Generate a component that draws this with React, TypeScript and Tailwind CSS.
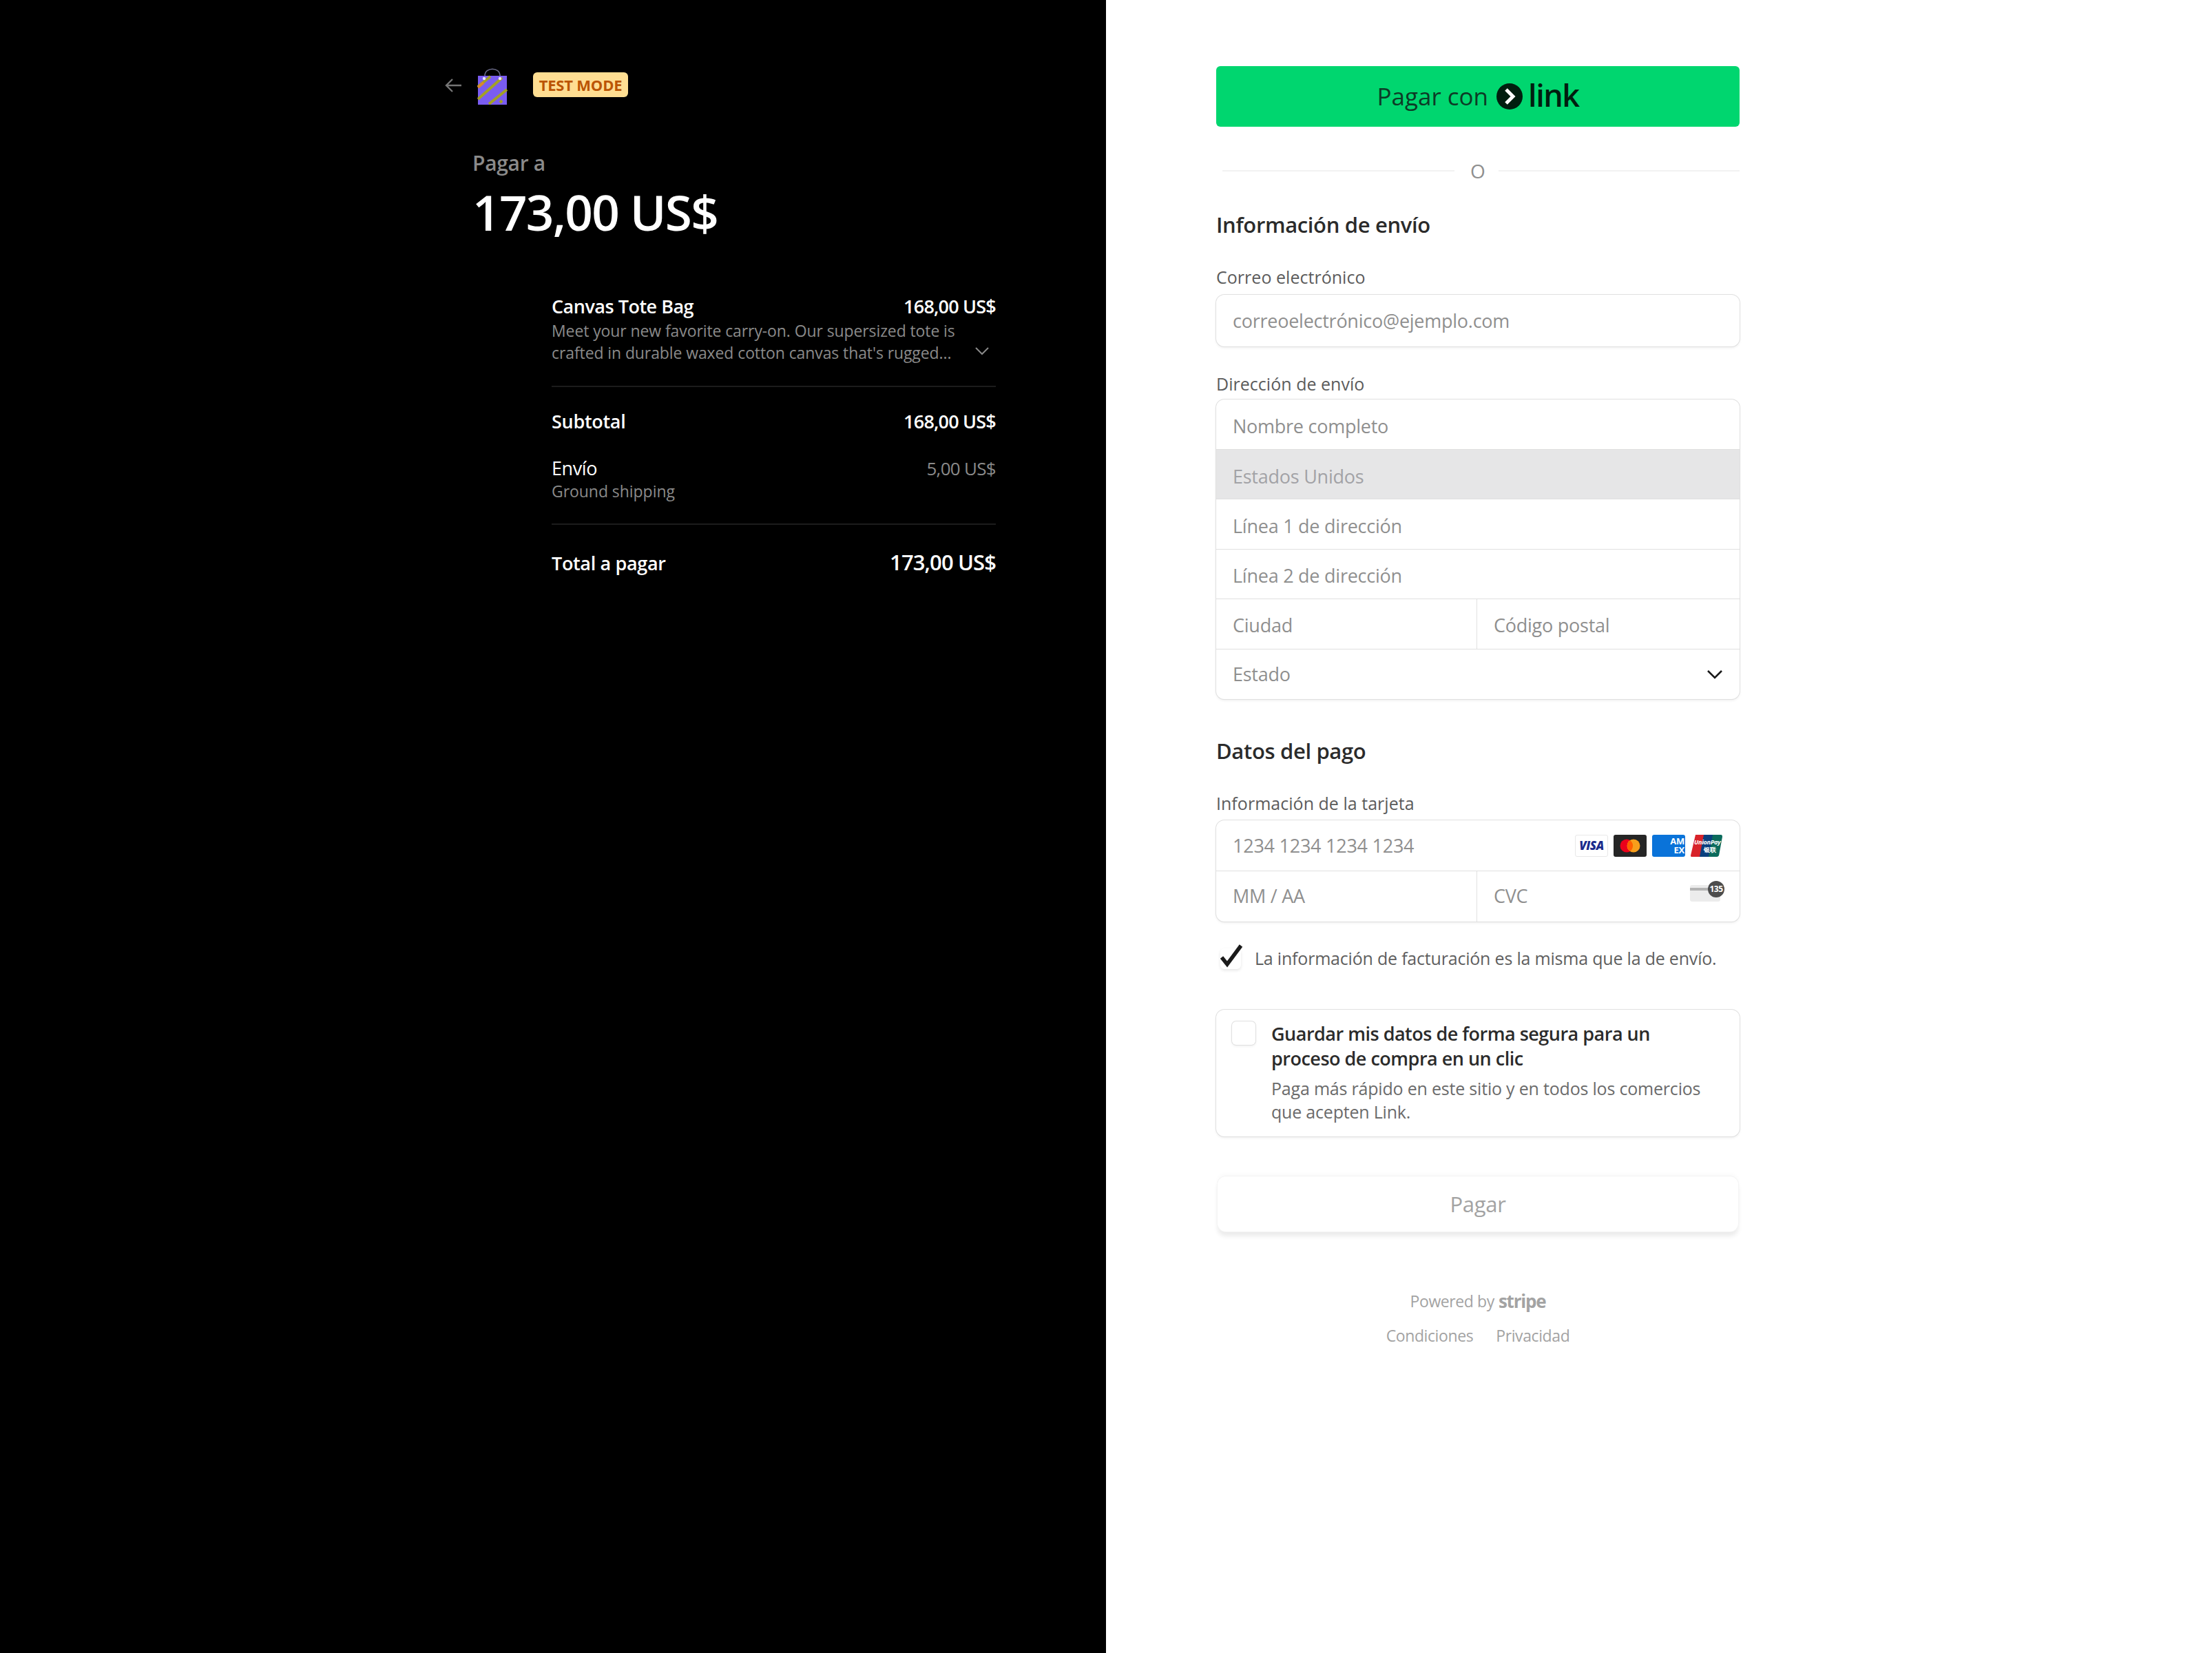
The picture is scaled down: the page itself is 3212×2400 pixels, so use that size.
import React from "react";

const FONT = "font-['Open_Sans','Noto_Sans',sans-serif]";
const SHADOW = "shadow-[0_0_0_1px_#e0e0e0,0_2px_4px_rgba(0,0,0,0.07),0_1px_1.5px_rgba(0,0,0,0.05)]";

function Bag() {
  return (
    <svg width="44" height="56" viewBox="0 0 44 56" className="block">
      <path d="M11 14 C11 1 33 1 33 14" fill="none" stroke="#6b6b8a" strokeWidth="1.5" />
      <rect x="1" y="14" width="42" height="42" fill="#7a5cf0" />
      <path d="M1 30 L19 15 M1 48 L36 17 M17 55 L43 34 M33 53 L36 50" stroke="#a3a024" strokeWidth="4" fill="none" />
      <path d="M1 31 L9 24" stroke="#d98a2b" strokeWidth="4" />
      <circle cx="10" cy="18" r="2.2" fill="#e8e4ff" />
      <circle cx="33" cy="18" r="2.2" fill="#e8e4ff" />
    </svg>
  );
}

function Row({ left, right, className = "" }: { left: React.ReactNode; right: React.ReactNode; className?: string }) {
  return (
    <div className={`flex justify-between items-center ${className}`}>
      {left}
      {right}
    </div>
  );
}

function Field({ children, className = "" }: { children: React.ReactNode; className?: string }) {
  return (
    <div className={`flex items-center px-[24px] text-[27px] tracking-[-0.25px] text-[#8f8f8f] ${className}`}>{children}</div>
  );
}

function Label({ children, className = "" }: { children: React.ReactNode; className?: string }) {
  return <div className={`h-[36px] leading-[36px] text-[25px] tracking-[0.03px] font-medium text-[#5c5c5c] ${className}`}>{children}</div>;
}

function Heading({ children, className = "" }: { children: React.ReactNode; className?: string }) {
  return <div className={`h-[44px] leading-[44px] text-[31px] tracking-[-0.35px] font-semibold text-[#2b2b2b] ${className}`}>{children}</div>;
}

function CardLogos() {
  return (
    <div className="flex gap-[8px]">
      <div className="w-[48px] h-[32px] rounded-[3px] border border-[#e8e8e8] bg-white flex items-center justify-center text-[17px] tracking-[-0.5px] italic font-extrabold text-[#1a2a8c]">VISA</div>
      <div className="w-[48px] h-[32px] rounded-[3px] bg-[#252525] flex items-center justify-center">
        <svg width="34" height="22" viewBox="0 0 34 22">
          <circle cx="12" cy="11" r="9.5" fill="#eb001b" />
          <circle cx="22" cy="11" r="9.5" fill="#f79e1b" />
          <path d="M17 3.2a9.5 9.5 0 0 1 0 15.6a9.5 9.5 0 0 1 0-15.6z" fill="#ff5f00" />
        </svg>
      </div>
      <div className="w-[48px] h-[32px] rounded-[3px] bg-[#0a73d9] flex flex-col items-end justify-center pr-[1px] text-[13px] leading-[13px] font-bold text-white">
        <span>AM</span>
        <span>EX</span>
      </div>
      <svg width="46" height="32" viewBox="0 0 46 32">
        <path d="M7 0H20L14 32H1Q0 32 0 30Z" fill="#d8232a" />
        <path d="M19 0H33L27 32H13Z" fill="#0a3f7e" />
        <path d="M32 0H44Q46 0 46 3L41 30Q40 32 38 32H26Z" fill="#0b6b5c" />
        <text x="5" y="14" fontSize="9" fontStyle="italic" fontWeight="700" fill="#fff">UnionPay</text>
        <text x="19" y="25" fontSize="9" fontWeight="700" fill="#fff">银联</text>
      </svg>
    </div>
  );
}

function CvcIcon() {
  return (
    <div className="relative w-[50px] h-[36px]">
      <div className="absolute left-0 top-[6px] w-[44px] h-[24px] rounded-[3px] bg-[#ececec]">
        <div className="mt-[4px] h-[4px] bg-[#b3b3b3]" />
      </div>
      <div className="absolute right-0 top-0 w-[24px] h-[24px] rounded-full bg-[#4d4d4d] flex items-center justify-center text-[12px] tracking-[-0.5px] font-bold text-white">135</div>
    </div>
  );
}

export default function App() {
  return (
    <div className={`flex min-h-screen w-full ${FONT}`}>
      <div className="w-[1606px] shrink-0 bg-black">
        <div className="ml-[645px] w-[801px] pt-[96px]">
          <div className="flex items-center h-[56px]">
            <svg width="26" height="24" viewBox="0 0 26 24" fill="none" stroke="#757575" strokeWidth="2.4" className="shrink-0">
              <path d="M25 12H3M12 3l-9 9 9 9" />
            </svg>
            <div className="ml-[22px]"><Bag /></div>
            <div className="ml-[37px] -translate-y-[1px] w-[138px] h-[36px] rounded-[6px] bg-[#ffde92] flex items-center justify-center text-[22px] font-bold tracking-[-0.2px] text-[#bb5504]">TEST MODE</div>
          </div>
          <div className="ml-[41px] mt-[65px] h-[40px] leading-[40px] text-[30px] tracking-[-0.3px] font-semibold text-[#8a8a8a]">Pagar a</div>
          <div className="ml-[41px] mt-[11px] h-[80px] leading-[80px] text-[71px] tracking-[-1.7px] font-semibold text-white">173,00 US$</div>
          <div className="ml-[156px] mt-[79px] text-white">
            <Row
              className="h-[36px]"
              left={<span className="text-[27px] tracking-[-0.5px] font-semibold">Canvas Tote Bag</span>}
              right={<span className="text-[27px] tracking-[-0.8px] font-semibold">168,00 US$</span>}
            />
            <div className="flex items-end justify-between mt-[0px] h-[66px] pb-[1px]">
              <div className="text-[23px] leading-[32px] tracking-[-0.1px] text-[#8a8a8a] pt-[1px]">
                <div>Meet your new favorite carry-on. Our supersized tote is</div>
                <div>crafted in durable waxed cotton canvas that's rugged...</div>
              </div>
              <svg width="20" height="14" viewBox="0 0 20 14" fill="none" stroke="#8a8a8a" strokeWidth="2" className="mb-[11px] mr-[10px]">
                <path d="M1 2l9 9 9-9" />
              </svg>
            </div>
            <div className="mt-[31px] h-[2px] bg-[#1c1c1c]" />
            <Row
              className="mt-[32px] h-[36px]"
              left={<span className="text-[27px] tracking-[-0.3px] font-semibold">Subtotal</span>}
              right={<span className="text-[27px] tracking-[-0.8px] font-semibold">168,00 US$</span>}
            />
            <Row
              className="mt-[32px] h-[36px]"
              left={<span className="text-[27px] tracking-[-0.4px] font-medium">Envío</span>}
              right={<span className="text-[26px] tracking-[-0.7px] text-[#8a8a8a]">5,00 US$</span>}
            />
            <div className="h-[30px] leading-[30px] text-[23px] tracking-[-0.05px] text-[#8a8a8a]">Ground shipping</div>
            <div className="mt-[32px] h-[2px] bg-[#1c1c1c]" />
            <Row
              className="mt-[36px] h-[40px]"
              left={<span className="text-[27px] tracking-[-0.35px] font-semibold">Total a pagar</span>}
              right={<span className="text-[31px] tracking-[-0.9px] font-semibold -translate-y-[2px]">173,00 US$</span>}
            />
          </div>
        </div>
      </div>

      <div className="flex-1 bg-white">
        <div className="ml-[160px] w-[760px] pt-[96px] pb-[100px]">
          <div className="h-[88px] rounded-[6px] bg-[#00d66f] flex items-center justify-center text-[#0d3b26]">
            <span className="text-[35px] font-medium">Pagar con</span>
            <svg width="38" height="38" viewBox="0 0 38 38" className="ml-[12px]">
              <circle cx="19" cy="19" r="19" fill="#011e0f" />
              <path d="M14 9l10 10-10 10" fill="none" stroke="#fff" strokeWidth="5" />
            </svg>
            <span className="ml-[8px] text-[45px] leading-[44px] tracking-[-1.5px] font-semibold text-[#011e0f] -translate-y-[2px]">link</span>
          </div>

          <div className="mt-[52px] h-[24px] flex items-center pl-[9px]">
            <div className="w-[337px] h-[2px] bg-[#f2f2f2]" />
            <div className="flex-1 pl-[4px] text-center text-[28px] leading-[24px] text-[#8f8f8f]">O</div>
            <div className="w-[350px] h-[2px] bg-[#f2f2f2]" />
          </div>

          <Heading className="mt-[44px]">Información de envío</Heading>
          <Label className="mt-[36px]">Correo electrónico</Label>
          <Field className={`mt-[8px] pt-[1px] h-[75px] rounded-[12px] bg-white ${SHADOW}`}>correoelectrónico@ejemplo.com</Field>

          <Label className="mt-[36px]">Dirección de envío</Label>
          <div className={`mt-[5px] h-[435px] grid grid-rows-6 rounded-[12px] bg-white overflow-hidden ${SHADOW}`}>
            <Field className="pt-[7px] border-b border-[#e0e0e0]">Nombre completo</Field>
            <Field className="pt-[7px] border-b border-[#e0e0e0] bg-[#e6e6e7] text-[#a2a2a6]">Estados Unidos</Field>
            <Field className="pt-[7px] border-b border-[#e0e0e0]">Línea 1 de dirección</Field>
            <Field className="pt-[6px] border-b border-[#e0e0e0]">Línea 2 de dirección</Field>
            <div className="flex border-b border-[#e0e0e0]">
              <Field className="pt-[5px] w-[379px] border-r border-[#e0e0e0]">Ciudad</Field>
              <Field className="pt-[5px] flex-1">Código postal</Field>
            </div>
            <Field className="pt-[1px] justify-between pr-[25px]">
              <span>Estado</span>
              <svg width="22" height="14" viewBox="0 0 22 14" fill="none" stroke="#1a1a1a" strokeWidth="2.6">
                <path d="M1 2l10 10L21 2" />
              </svg>
            </Field>
          </div>

          <Heading className="mt-[53px]">Datos del pago</Heading>
          <Label className="mt-[36px]">Información de la tarjeta</Label>
          <div className={`mt-[7px] h-[147px] grid grid-rows-2 rounded-[12px] bg-white overflow-hidden ${SHADOW}`}>
            <Field className="pt-[1px] justify-between border-b border-[#e0e0e0] pr-[25px]">
              <span>1234 1234 1234 1234</span>
              <CardLogos />
            </Field>
            <div className="flex">
              <Field className="w-[379px] border-r border-[#e0e0e0]">MM / AA</Field>
              <Field className="flex-1 justify-between pr-[22px]">
                <span>CVC</span>
                <div className="-translate-y-[4px]"><CvcIcon /></div>
              </Field>
            </div>
          </div>

          <div className="mt-[34px] h-[40px] flex items-center">
            <div className="ml-[6px] relative w-[30px] h-[30px] rounded-[6px] bg-white shadow-[0_2px_4px_rgba(0,0,0,0.1)]">
              <svg width="34" height="36" viewBox="0 0 34 36" fill="none" stroke="#1a1a1a" strokeWidth="5.5" className="absolute -left-[1px] -top-[7px]">
                <path d="M3 20l8 10L31 3" />
              </svg>
            </div>
            <div className="ml-[20px] text-[25px] tracking-[-0.2px] text-[#5f5f5f]">La información de facturación es la misma que la de envío.</div>
          </div>

          <div className={`mt-[54px] h-[184px] rounded-[12px] bg-white flex pl-[23px] pr-[16px] pt-[17px] ${SHADOW}`}>
            <div className="w-[34px] h-[34px] shrink-0 rounded-[6px] bg-white shadow-[0_0_0_1px_#e0e0e0,0_2px_4px_rgba(0,0,0,0.07)]" />
            <div className="ml-[23px]">
              <div className="max-w-[590px] text-[27px] leading-[36px] tracking-[-0.5px] font-semibold text-[#2b2b2b]">Guardar mis datos de forma segura para un proceso de compra en un clic</div>
              <div className="mt-[8px] max-w-[625px] text-[25px] leading-[34px] tracking-[-0.2px] text-[#6b6b6b]">Paga más rápido en este sitio y en todos los comercios que acepten Link.</div>
            </div>
          </div>

          <div className="mt-[58px] mx-[2px] h-[80px] rounded-[12px] bg-white flex items-center justify-center text-[31px] font-medium tracking-[-0.3px] text-[#a3a3a3] shadow-[0_0_0_1px_#f4f4f4,0_-4px_6px_rgba(0,0,0,0.025),0_7px_6px_rgba(0,0,0,0.08)]">Pagar</div>

          <div className="mt-[83px] h-[36px] flex items-center justify-center text-[#a3a3a3] text-[23px] tracking-[-0.4px]">
            <span>Powered by</span>
            <span className="ml-[6px] text-[26px] tracking-[-1.2px] font-bold text-[#a3a3a3]">stripe</span>
          </div>
          <div className="mt-[14px] h-[36px] flex items-center justify-center gap-[33px] text-[#a3a3a3] text-[23px] tracking-[-0.4px]">
            <span>Condiciones</span>
            <span>Privacidad</span>
          </div>
        </div>
      </div>
    </div>
  );
}
